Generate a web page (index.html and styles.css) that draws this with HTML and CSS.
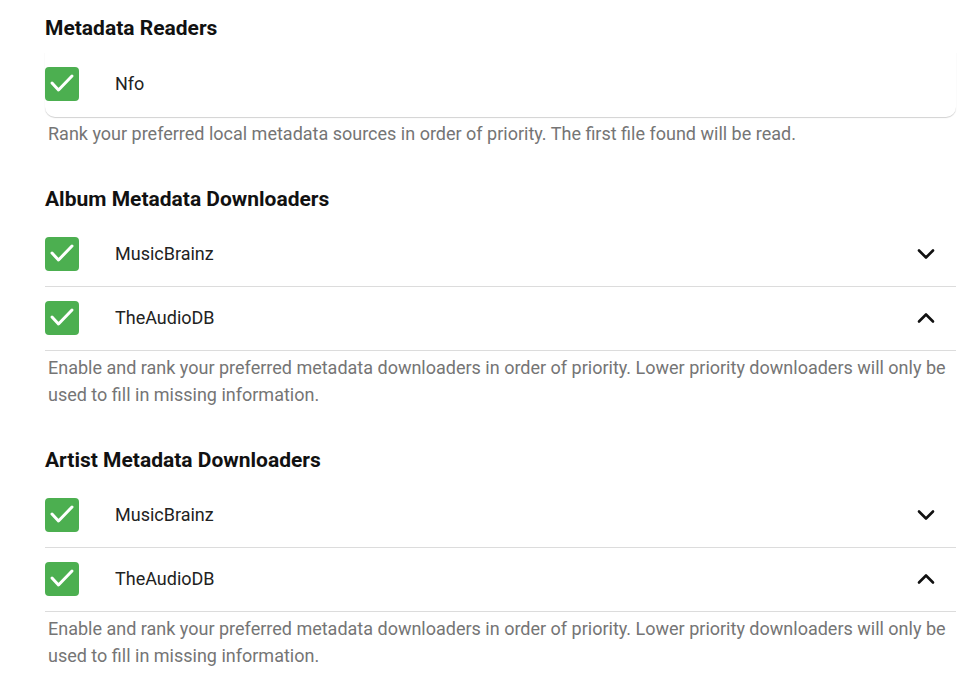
FILE: index.html
```html
<!DOCTYPE html>
<html lang="en">
  <head>
    <meta charset="UTF-8" />
    <meta name="viewport" content="width=device-width, initial-scale=1.0" />
    <title>Metadata Settings</title>
    <link rel="stylesheet" href="styles.css">
  </head>
  <body>
    <div class="settings">

      <div class="section">
        <h2>Metadata Readers</h2>
        <div class="list card">
          <div class="row">
            <span class="check">
              <svg viewBox="0 0 34 34"><polyline points="7,16 13.5,23 27,9" /></svg>
            </span>
            <span class="name">Nfo</span>
          </div>
        </div>
        <p class="help">Rank your preferred local metadata sources in order of priority. The first file found will be read.</p>
      </div>

      <div class="section">
        <h2>Album Metadata Downloaders</h2>
        <div class="list">
          <div class="row">
            <span class="check">
              <svg viewBox="0 0 34 34"><polyline points="7,16 13.5,23 27,9" /></svg>
            </span>
            <span class="name">MusicBrainz</span>
            <svg class="arrow" viewBox="0 0 24 24"><polyline points="5,8.5 12,15.5 19,8.5" /></svg>
          </div>
          <div class="row">
            <span class="check">
              <svg viewBox="0 0 34 34"><polyline points="7,16 13.5,23 27,9" /></svg>
            </span>
            <span class="name">TheAudioDB</span>
            <svg class="arrow" viewBox="0 0 24 24"><polyline points="5,15.5 12,8.5 19,15.5" /></svg>
          </div>
        </div>
        <p class="help">Enable and rank your preferred metadata downloaders in order of priority. Lower priority downloaders will only be used to fill in missing information.</p>
      </div>

      <div class="section">
        <h2>Artist Metadata Downloaders</h2>
        <div class="list">
          <div class="row">
            <span class="check">
              <svg viewBox="0 0 34 34"><polyline points="7,16 13.5,23 27,9" /></svg>
            </span>
            <span class="name">MusicBrainz</span>
            <svg class="arrow" viewBox="0 0 24 24"><polyline points="5,8.5 12,15.5 19,8.5" /></svg>
          </div>
          <div class="row">
            <span class="check">
              <svg viewBox="0 0 34 34"><polyline points="7,16 13.5,23 27,9" /></svg>
            </span>
            <span class="name">TheAudioDB</span>
            <svg class="arrow" viewBox="0 0 24 24"><polyline points="5,15.5 12,8.5 19,15.5" /></svg>
          </div>
        </div>
        <p class="help">Enable and rank your preferred metadata downloaders in order of priority. Lower priority downloaders will only be used to fill in missing information.</p>
      </div>

    </div>
  </body>
</html>
```

FILE: styles.css
```css
body {
  margin: 0;
  font-family: Roboto, "Liberation Sans", Arial, sans-serif;
  background-color: #fff;
  color: #202020;
}
.settings {
  padding: 16px 16px 0 45px;
  display: flex;
  flex-direction: column;
  gap: 40px;
}
.section h2 {
  margin: 0 0 12px 0;
  font-size: 21px;
  line-height: 24px;
  font-weight: 700;
  color: #111;
}
.list {
  display: flex;
  flex-direction: column;
}
.row {
  height: 64px;
  padding-bottom: 2px;
  display: flex;
  align-items: center;
  border-bottom: 1px solid #dcdcdc;
  box-sizing: border-box;
}
.card .row {
  border-bottom: none;
  height: 65px;
  border-radius: 0 0 10px 10px;
  box-shadow: 0 1px 1px rgba(0, 0, 0, 0.18);
}
.check {
  width: 34px;
  height: 34px;
  border-radius: 4px;
  background-color: #4caf50;
  display: flex;
  flex-shrink: 0;
}
.check svg {
  width: 34px;
  height: 34px;
  fill: none;
  stroke: #fff;
  stroke-width: 3;
  stroke-linecap: round;
  stroke-linejoin: round;
}
.name {
  margin-left: 36px;
  font-size: 18px;
  color: #222;
  flex: 1;
}
.arrow {
  width: 24px;
  height: 24px;
  margin-right: 18px;
  fill: none;
  stroke: #111;
  stroke-width: 2.6;
  stroke-linecap: round;
  stroke-linejoin: round;
}
.help {
  margin: 3px 0 0 3px;
  font-size: 18px;
  line-height: 27px;
  color: #757575;
}
```
